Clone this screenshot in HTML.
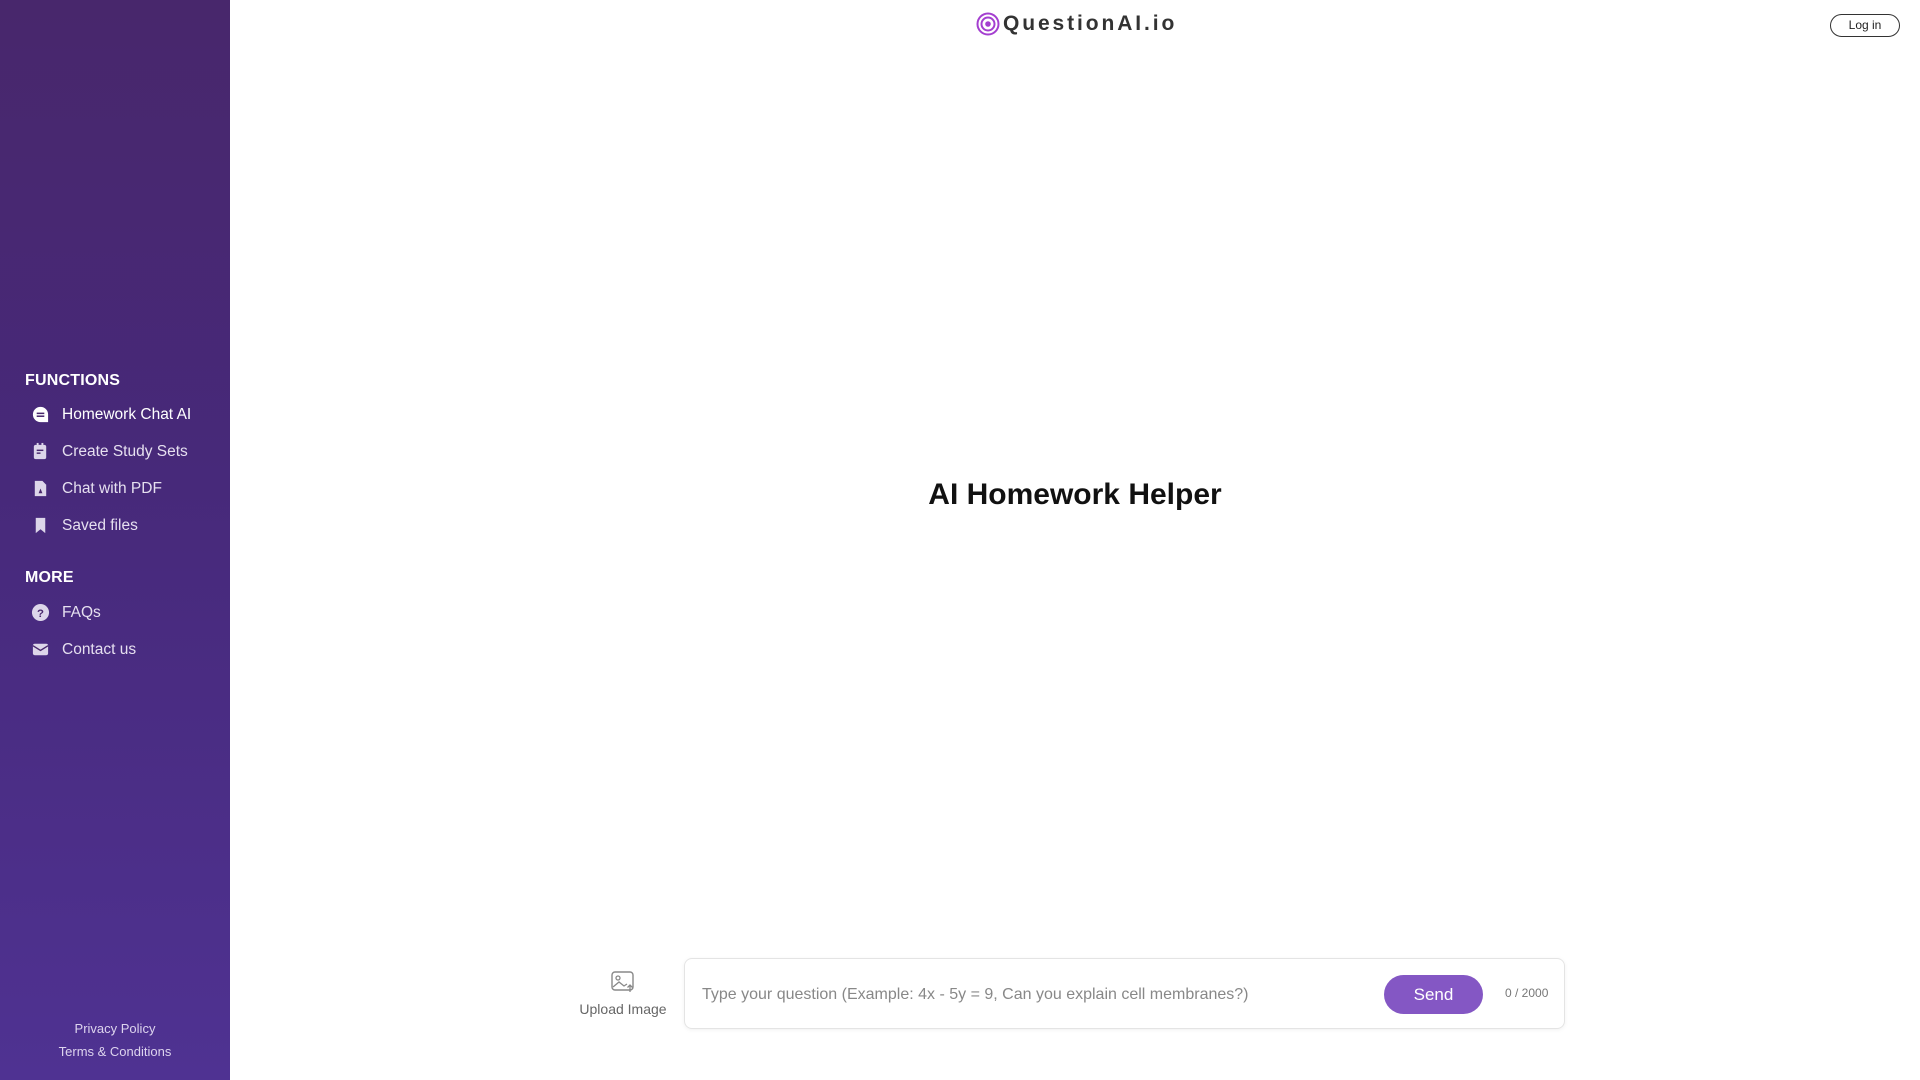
<!DOCTYPE html>
<html><head><meta charset="utf-8"><style>
*{margin:0;padding:0;box-sizing:border-box}
body{width:1920px;height:1080px;overflow:hidden;background:#fff;font-family:"Liberation Sans",sans-serif;position:relative}
.sb{position:absolute;left:0;top:0;width:230px;height:1080px;background:linear-gradient(180deg,#48276c 0%,#47297a 45%,#4f3292 100%);color:#fff}
.h{position:absolute;left:25px;font-size:16px;font-weight:bold;letter-spacing:0.2px}
.it{position:absolute;left:31px;font-size:15.5px;color:#e6e0f0;display:flex;align-items:center}
.it svg{width:19px;height:19px;margin-right:12px}
.ft{position:absolute;width:230px;text-align:center;font-size:13px;color:#ddd4ee}
</style></head><body>
<div class="sb">
<div class="h" style="top:372px">FUNCTIONS</div>
<div class="it" style="top:405px;color:#fff"><svg viewBox="0 0 20 20"><path d="M10 2a8 8 0 1 0 0 16h8v-8a8 8 0 0 0-8-8z" fill="#fff"/><rect x="6" y="8" width="8" height="1.6" fill="#48276c"/><rect x="6" y="11" width="8" height="1.6" fill="#48276c"/></svg>Homework Chat AI</div>
<div class="it" style="top:442px"><svg viewBox="0 0 20 20"><rect x="3" y="3" width="13" height="15" rx="2" fill="#ddd6ea"/><rect x="6" y="1" width="2" height="4" fill="#ddd6ea"/><rect x="11" y="1" width="2" height="4" fill="#ddd6ea"/><rect x="6" y="8" width="7" height="1.5" fill="#48276c"/><rect x="6" y="11" width="4" height="1.5" fill="#48276c"/></svg>Create Study Sets</div>
<div class="it" style="top:479px"><svg viewBox="0 0 20 20"><path d="M4 2h8l4 4v12H4z" fill="#ddd6ea"/><path d="M8 15l2-5 2 5z" fill="#48276c"/></svg>Chat with PDF</div>
<div class="it" style="top:516px"><svg viewBox="0 0 20 20"><path d="M5 2h10v16l-5-4-5 4z" fill="#ddd6ea"/></svg>Saved files</div>
<div class="h" style="top:569px">MORE</div>
<div class="it" style="top:603px"><svg viewBox="0 0 20 20"><circle cx="10" cy="10" r="9" fill="#ddd6ea"/><text x="10" y="14.5" font-size="12" font-weight="bold" text-anchor="middle" fill="#48276c" font-family="Liberation Sans">?</text></svg>FAQs</div>
<div class="it" style="top:640px"><svg viewBox="0 0 20 20"><rect x="2" y="4" width="16" height="12" rx="2" fill="#ddd6ea"/><path d="M2 6l8 5 8-5" stroke="#48276c" stroke-width="1.5" fill="none"/></svg>Contact us</div>
<div class="ft" style="top:1021px">Privacy Policy</div>
<div class="ft" style="top:1044px">Terms &amp; Conditions</div>
</div>
<div style="position:absolute;left:976px;top:12px;display:flex;align-items:center">
<svg width="24" height="24" viewBox="0 0 24 24"><circle cx="12" cy="12" r="10.5" fill="none" stroke="#a43fd0" stroke-width="2"/><circle cx="12" cy="12" r="6.5" fill="none" stroke="#a43fd0" stroke-width="2"/><circle cx="12" cy="12" r="2.8" fill="#a43fd0"/></svg>
<span style="font-size:21px;font-weight:bold;color:#333;letter-spacing:2.9px;margin-left:3px">QuestionAI.io</span></div>
<div style="position:absolute;left:1830px;top:14px;width:70px;height:23px;border:1px solid #333;border-radius:12px;font-size:12px;text-align:center;line-height:21px;color:#222">Log in</div>
<div style="position:absolute;left:230px;width:1690px;top:478px;text-align:center;font-size:30px;font-weight:bold;color:#111">AI Homework Helper</div>
<div style="position:absolute;left:573px;top:970px;width:100px;text-align:center">
<svg width="26" height="24" viewBox="0 0 26 24"><rect x="2" y="2" width="21" height="18" rx="3" fill="none" stroke="#888" stroke-width="1.4"/><circle cx="8" cy="8" r="2" fill="none" stroke="#888" stroke-width="1.3"/><path d="M3 17l6-5 5 4 3-2" fill="none" stroke="#888" stroke-width="1.3"/><path d="M20 22v-7M17.5 17.5l2.5-2.5 2.5 2.5" stroke="#888" stroke-width="1.3" fill="none"/></svg>
<div style="font-size:14px;color:#666;margin-top:2px">Upload Image</div></div>
<div style="position:absolute;left:684px;top:958px;width:881px;height:71px;border:1px solid #e4e4e4;border-radius:8px;box-shadow:0 1px 4px rgba(0,0,0,.06)">
<div style="position:absolute;left:17px;top:27px;font-size:16px;color:#888">Type your question (Example: 4x - 5y = 9, Can you explain cell membranes?)</div>
<div style="position:absolute;left:699px;top:16px;width:99px;height:39px;border-radius:20px;background:#8457c4;color:#fff;font-size:17px;text-align:center;line-height:39px">Send</div>
<div style="position:absolute;left:820px;top:27px;font-size:12px;color:#777">0 / 2000</div>
</div>
</body></html>
